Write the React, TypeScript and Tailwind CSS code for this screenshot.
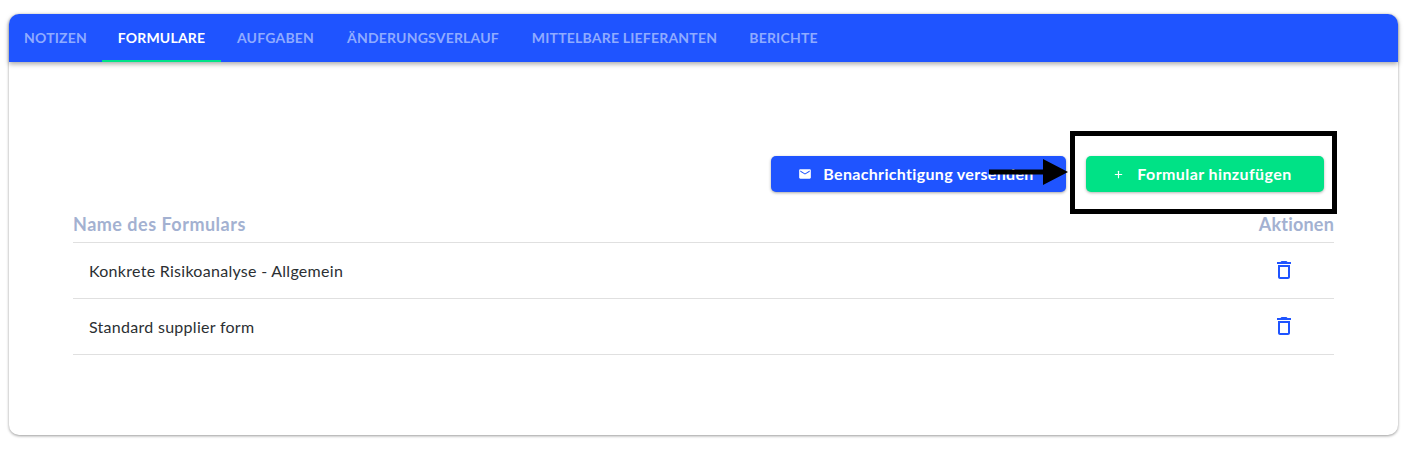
import React from 'react';
import { Plus } from 'lucide-react';

const tabs = [
  { label: 'NOTIZEN', width: 'w-[93px]' },
  { label: 'FORMULARE', width: 'w-[119px]' },
  { label: 'AUFGABEN', width: 'w-[109px]' },
  { label: 'ÄNDERUNGSVERLAUF', width: 'w-[186px]' },
  { label: 'MITTELBARE LIEFERANTEN', width: 'w-[217px]' },
  { label: 'BERICHTE', width: 'w-[101px]' },
];
const rows = ['Konkrete Risikoanalyse - Allgemein', 'Standard supplier form'];

const TrashIcon = () => (
  <svg className="-mt-0.5" width="24" height="24" viewBox="0 0 24 24" fill="#1f54ff">
    <path d="M6 19c0 1.1.9 2 2 2h8c1.1 0 2-.9 2-2V7H6v12zM8 9h8v10H8V9zm7.5-5l-1-1h-5l-1 1H5v2h14V4z" />
  </svg>
);

const MailIcon = () => (
  <svg width="14" height="14" viewBox="0 0 24 24" fill="white">
    <path d="M20 4H4c-1.1 0-2 .9-2 2v12c0 1.1.9 2 2 2h16c1.1 0 2-.9 2-2V6c0-1.1-.9-2-2-2zm0 4l-8 5-8-5V6l8 5 8-5v2z" />
  </svg>
);

export default function App() {
  return (
    <div className="h-[449px] w-[1416px] overflow-hidden bg-white pl-[9px] pt-[14px] font-['Lato','Liberation_Sans',sans-serif]">
      <div className="relative h-[421px] w-[1389px] rounded-[10px] bg-white shadow-[0_1px_3px_rgba(0,0,0,0.4)]">
        <div className="flex h-12 rounded-t-[10px] bg-[#1f54ff] shadow-[0_2px_5px_rgba(0,0,0,0.35)]">
          {tabs.map((tab) => (
            <div key={tab.label} className={tab.width}>
              <div
                className={
                  tab.label === 'FORMULARE'
                    ? 'flex h-12 items-center justify-center whitespace-nowrap border-b-2 border-[#00e286] text-[14px] font-bold tracking-[0.2px] text-white'
                    : 'flex h-12 items-center justify-center whitespace-nowrap border-b-2 border-transparent text-[14px] font-bold tracking-[0.2px] text-[#8fabff]'
                }
              >
                {tab.label}
              </div>
            </div>
          ))}
        </div>

        <div className="px-16 pt-[94px]">
          <div className="flex justify-end gap-5 pr-[10px]">
            <button className="flex h-9 w-[295px] items-center justify-center gap-[11px] rounded-[5px] bg-[#1f54ff] pr-[5px] text-[16px] font-bold tracking-[0.33px] text-white shadow-[0_1px_3px_rgba(0,0,0,0.35)]">
              <MailIcon />
              Benachrichtigung versenden
            </button>
            <button className="flex h-9 w-[238px] items-center justify-center gap-[13px] rounded-[5px] bg-[#00e286] pr-[5px] text-[16px] font-bold tracking-[0.4px] text-white shadow-[0_1px_3px_rgba(0,0,0,0.3)]">
              <Plus size={11} strokeWidth={2.5} />
              Formular hinzufügen
            </button>
          </div>

          <div className="mt-[18px] flex h-[33px] items-center justify-between border-b border-[#e0e0e0] pb-[3px] text-[18px] font-bold text-[#a3b1d1]">
            <span className="tracking-[0.5px]">Name des Formulars</span>
            <span className="tracking-[0.2px]">Aktionen</span>
          </div>
          {rows.map((row) => (
            <div key={row} className="flex h-14 items-center justify-between border-b border-[#e0e0e0] pl-4 pr-[38px] text-[16px] tracking-[0.28px] text-[#2b2f33]">
              <span>{row}</span>
              <TrashIcon />
            </div>
          ))}
        </div>

        {/* annotation drawn over the screenshot */}
        <div className="absolute left-[1061px] top-[117px] h-[83px] w-[267px] border-[5px] border-black" />
        <svg className="absolute left-[980px] top-[143px]" width="80" height="30" viewBox="0 0 80 30">
          <path d="M0 12.5h54V2l25 13-25 13V17.5H0z" fill="black" />
        </svg>
      </div>
    </div>
  );
}
